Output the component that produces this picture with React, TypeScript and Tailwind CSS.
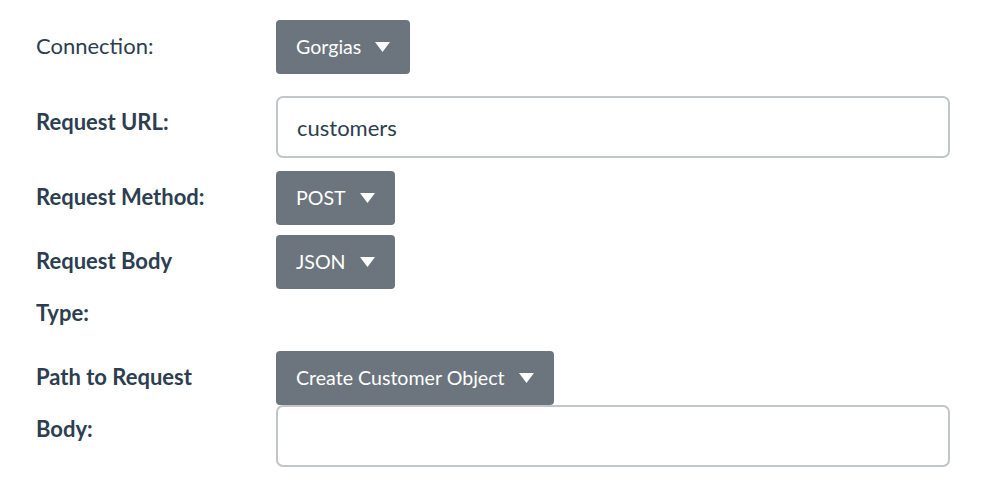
import React from "react";

function Caret() {
  return (
    <svg width="15" height="10" viewBox="0 0 15 10" className="shrink-0">
      <path d="M0 0 L15 0 L7.5 10 Z" fill="#ffffff" />
    </svg>
  );
}

function Dropdown({ label }: { label: string }) {
  return (
    <div className="inline-flex h-[54px] items-center gap-[14px] rounded-[4px] bg-[#6c757d] pl-[20px] pr-[20px] text-[19.6px] text-white">
      <span>{label}</span>
      <Caret />
    </div>
  );
}

function Label({ children, bold = true }: { children: React.ReactNode; bold?: boolean }) {
  return (
    <div className="w-[240px] shrink-0 pr-[56px]">
      <div className={`text-[22px] leading-[52px] text-[#2c3e50] ${bold ? "font-bold" : "font-normal"}`}>
        {children}
      </div>
    </div>
  );
}

function TextBox({ value }: { value: string }) {
  return (
    <div className="flex h-[62px] w-[674px] items-center rounded-[7px] border-2 border-[#c1c6cb] bg-white px-[19px] text-[22px] text-[#2c3e50]">
      {value}
    </div>
  );
}

export default function App() {
  return (
    <div
      className="h-[482px] w-[998px] bg-white pl-[36px] pt-[20px]"
      style={{ fontFamily: "Lato, 'Liberation Sans', sans-serif" }}
    >
      <div className="flex items-start">
        <Label bold={false}>Connection:</Label>
        <Dropdown label="Gorgias" />
      </div>
      <div className="mt-[22px] flex items-start">
        <Label>Request URL:</Label>
        <TextBox value="customers" />
      </div>
      <div className="mt-[13px] flex items-start">
        <Label>Request Method:</Label>
        <Dropdown label="POST" />
      </div>
      <div className="mt-[10px] flex items-start">
        <Label>Request Body Type:</Label>
        <Dropdown label="JSON" />
      </div>
      <div className="mt-[12px] flex items-start">
        <Label>Path to Request Body:</Label>
        <div className="flex flex-col items-start">
          <Dropdown label="Create Customer Object" />
          <TextBox value="" />
        </div>
      </div>
    </div>
  );
}
